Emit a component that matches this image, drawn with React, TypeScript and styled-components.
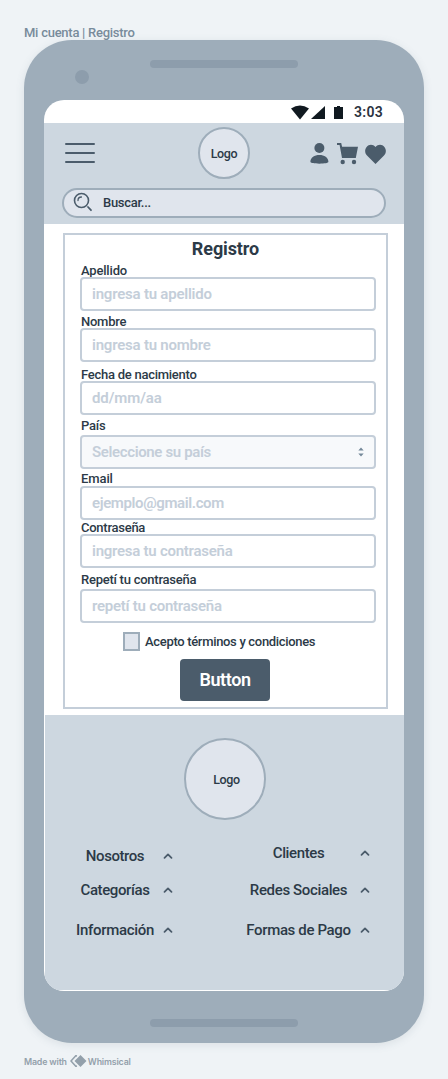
import React from "react";
import styled, { createGlobalStyle } from "styled-components";

const GlobalStyle = createGlobalStyle`
  * { box-sizing: border-box; }
  body {
    margin: 0;
    background: #eff3f6;
    color: #2c3a47;
    font-family: Roboto, "Liberation Sans", sans-serif;
    font-weight: 500;
  }
`;

const Page = styled.main`
  width: 448px;
  height: 1079px;
  padding: 25px 24px 0;
  overflow: hidden;
`;

const FrameTitle = styled.div`
  height: 15px;
  font-size: 13px;
  line-height: 16px;
  letter-spacing: -0.26px;
  color: #788b9b;
  white-space: nowrap;
`;

const Phone = styled.section`
  width: 400px;
  height: 1003px;
  padding: 0 20px;
  border-radius: 48px;
  background: #9eadba;
  box-shadow: 0 2px 8px rgba(90, 110, 130, 0.14);
  display: flex;
  flex-direction: column;
`;

const PhoneTop = styled.div`
  height: 60px;
  display: flex;
  padding: 20px 0 0 31px;
`;

const Camera = styled.span`
  width: 14px;
  height: 14px;
  margin-top: 10px;
  border-radius: 50%;
  background: #8d9dac;
`;

const Speaker = styled.span`
  width: 148px;
  height: 8px;
  border-radius: 4px;
  background: #8d9dac;
`;

const TopSpeaker = styled(Speaker)`
  margin-left: 61px;
`;

const PhoneBottom = styled.div`
  flex: 1;
  display: flex;
  justify-content: center;
  padding-top: 28px;
`;

const Screen = styled.div`
  height: 891px;
  border-radius: 20px;
  background: #fff;
  overflow: hidden;
`;

const StatusBar = styled.div`
  height: 23px;
  display: flex;
  align-items: center;
  justify-content: flex-end;
  padding: 1px 21px 0 0;
  color: #2c333f;
  font-size: 14px;
  font-weight: 600;
  letter-spacing: 0.3px;
`;

const StatusIcons = styled.svg`
  width: 54px;
  height: 15px;
  margin: 1px 9px 0 0;
`;

const Header = styled.header`
  height: 101px;
  background: #cdd7e0;
  padding: 4px 18px 0;
`;

const HeaderRow = styled.div`
  height: 52px;
  display: grid;
  grid-template-columns: 136px 52px 1fr;
  align-items: center;
`;

const MenuIcon = styled.svg`
  width: 30px;
  height: 22px;
  margin-left: 3px;
`;

const Logo = styled.div<{ $size: number }>`
  width: ${(p) => p.$size}px;
  height: ${(p) => p.$size}px;
  border: 2px solid #9eadba;
  border-radius: 50%;
  background: #e0e5ed;
  display: flex;
  align-items: center;
  justify-content: center;
  font-size: 12.5px;
  letter-spacing: -0.35px;
`;

const HeaderIcons = styled.svg`
  width: 78px;
  height: 24px;
  justify-self: end;
`;

const Search = styled.div`
  height: 30px;
  width: 324px;
  margin-top: 9px;
  border: 2px solid #9eadba;
  border-radius: 15px;
  background: #e0e5ed;
  display: flex;
  align-items: center;
  padding: 0 0 2px 9px;
  font-size: 13px;
  letter-spacing: -0.3px;
`;

const SearchIcon = styled.svg`
  width: 20px;
  height: 20px;
  margin-right: 10px;
`;

const FormArea = styled.div`
  height: 491px;
  padding: 9px 16px 0 19px;
`;

const Form = styled.form`
  height: 476px;
  border: 2px solid #c4ced9;
  padding: 4px 10px 0 15px;
  display: flex;
  flex-direction: column;
`;

const Title = styled.h1`
  margin: 0;
  height: 24px;
  font-size: 18px;
  line-height: 20px;
  font-weight: 700;
  letter-spacing: -0.1px;
  text-align: center;
  padding-right: 5px;
`;

const Field = styled.label<{ $before: number; $gap: number }>`
  display: flex;
  flex-direction: column;
  margin-top: ${(p) => p.$before}px;
  gap: ${(p) => p.$gap}px;
`;

const Caption = styled.span<{ $track: number }>`
  height: 14px;
  line-height: 15px;
  font-size: 13px;
  letter-spacing: ${(p) => p.$track}px;
  padding-left: 1px;
`;

const Control = styled.span<{ $muted?: boolean; $track: number }>`
  width: 296px;
  height: 34px;
  border: 2px solid #c4ced9;
  border-radius: 4px;
  background: ${(p) => (p.$muted ? "#f7f9fb" : "#fff")};
  color: #c4ced9;
  display: flex;
  align-items: center;
  justify-content: space-between;
  padding: 0 10px;
  font-size: 15px;
  font-weight: 600;
  letter-spacing: ${(p) => p.$track}px;
`;

const SortIcon = styled.svg`
  width: 6px;
  height: 10px;
`;

const Terms = styled.label`
  height: 19px;
  margin: 9px 0 0 43px;
  display: flex;
  align-items: center;
  gap: 5px;
  font-size: 13px;
  letter-spacing: -0.32px;
`;

const CheckBox = styled.span`
  width: 17px;
  height: 19px;
  border: 2px solid #9eadba;
  background: #e0e5ed;
`;

const Submit = styled.button`
  width: 90px;
  height: 42px;
  margin: 8px 0 0 100px;
  padding: 0 0 2px;
  border: 0;
  border-radius: 4px;
  background: #4b5c6b;
  color: #fff;
  font: 600 18px Roboto, "Liberation Sans", sans-serif;
  letter-spacing: -0.4px;
`;

const Footer = styled.footer`
  height: 275px;
  margin-left: 1px;
  background: #cdd7e0;
  padding-top: 23px;
`;

const FooterLogo = styled(Logo)`
  margin-left: 139px;
  padding: 1px 0 0 3px;
`;

const Columns = styled.nav`
  display: grid;
  grid-template-columns: 97px 124px;
  column-gap: 73px;
  padding: 22px 34px 0 31px;
`;

const Column = styled.div`
  display: flex;
  flex-direction: column;
`;

const FooterItem = styled.div<{ $top: number; $track: number }>`
  height: 20px;
  margin-top: ${(p) => p.$top}px;
  display: flex;
  align-items: center;
  font-size: 15px;
  letter-spacing: ${(p) => p.$track}px;
  white-space: nowrap;
  & > span { flex: 1; text-align: center; }
`;

const Chevron = styled.svg`
  width: 10px;
  height: 8px;
  margin-left: 9px;
  flex: none;
`;

const Credit = styled.div`
  height: 14px;
  margin-top: 11px;
  display: flex;
  align-items: center;
  color: #93a0ab;
  font: 600 8.8px Inter, sans-serif;
  letter-spacing: -0.16px;
`;

const Diamonds = styled.svg`
  width: 17px;
  height: 12px;
  margin: 0 1px 0 3px;
`;

const fields = [
  { label: "Apellido", hint: "ingresa tu apellido", before: 0, gap: 0, lt: -0.18, ht: -0.22 },
  { label: "Nombre", hint: "ingresa tu nombre", before: 3, gap: 0, lt: -0.25, ht: -0.22 },
  { label: "Fecha de nacimiento", hint: "dd/mm/aa", before: 5, gap: 0, lt: -0.26, ht: -0.1 },
  { label: "País", hint: "Seleccione su país", before: 3, gap: 3, lt: -0.2, ht: -0.36, select: true },
  { label: "Email", hint: "ejemplo@gmail.com", before: 2, gap: 1, lt: -0.1, ht: -0.38 },
  { label: "Contraseña", hint: "ingresa tu contraseña", before: 0, gap: 0, lt: -0.26, ht: -0.26 },
  { label: "Repetí tu contraseña", hint: "repetí tu contraseña", before: 4, gap: 3, lt: -0.25, ht: -0.26 },
];

const leftLinks = [
  { text: "Nosotros", top: 4, track: -0.42 },
  { text: "Categorías", top: 14, track: -0.4 },
  { text: "Información", top: 20, track: -0.32 },
];

const rightLinks = [
  { text: "Clientes", top: 1, track: -0.38 },
  { text: "Redes Sociales", top: 17, track: -0.36 },
  { text: "Formas de Pago", top: 20, track: -0.36 },
];

const LinkColumn = ({ links }: { links: typeof leftLinks }) => (
  <Column>
    {links.map((l) => (
      <FooterItem key={l.text} $top={l.top} $track={l.track}>
        <span>{l.text}</span>
        <Chevron viewBox="0 0 10 8" fill="none" stroke="#4b5c6b" strokeWidth="1.8" strokeLinecap="round" strokeLinejoin="round">
          <path d="M1.5 5.8 5 2.4l3.5 3.4" />
        </Chevron>
      </FooterItem>
    ))}
  </Column>
);

export default function App() {
  return (
    <Page>
      <GlobalStyle />
      <FrameTitle>Mi cuenta | Registro</FrameTitle>
      <Phone>
        <PhoneTop>
          <Camera />
          <TopSpeaker />
        </PhoneTop>
        <Screen>
          <StatusBar>
            <StatusIcons viewBox="0 0 54 15" fill="#101920">
              <path d="M0 3.5Q9-2.5 18 3.5L9 14.5Z" />
              <path d="M34 1v13H20Z" />
              <path d="M43 2h3V1h3v1h3v12h-9Z" />
            </StatusIcons>
            3:03
          </StatusBar>
          <Header>
            <HeaderRow>
              <MenuIcon viewBox="0 0 30 22" stroke="#4b5c6b" strokeWidth="2" strokeLinecap="round">
                <path d="M1 2h28M1 11h28M1 20h28" />
              </MenuIcon>
              <Logo $size={52}>Logo</Logo>
              <HeaderIcons viewBox="0 0 78 24" fill="#4b5c6b">
                <circle cx="11.4" cy="7" r="5" />
                <path d="M2.4 20.8C2.4 16.200 6.500 13.900 11.400 13.900s9 2.300 9 6.900c0 1.200-4 1.900-9 1.900s-9-.7-9-1.900Z" />
                <path d="M29 2h4.200l.9 3.700H50L47.800 17H34L31.600 4H29Z" />
                <circle cx="34.7" cy="21" r="2.2" />
                <circle cx="46" cy="21" r="2.2" />
                <path d="M67.500 23 59 14.400c-2.300-2.400-2.500-6-.4-8.500 2.300-2.700 6.400-2.800 8.900.1 2.500-2.900 6.600-2.800 8.900-.1 2.100 2.500 1.900 6.100-.4 8.500Z" />
              </HeaderIcons>
            </HeaderRow>
            <Search>
              <SearchIcon viewBox="0 0 20 20" fill="none" stroke="#4b5c6b" strokeLinecap="round">
                <circle cx="8.5" cy="8.5" r="7" strokeWidth="1.6" />
                <path d="M5 8.5Q5 5 8.500 5" strokeWidth="1.3" />
                <path d="m15 15 3 3.2" strokeWidth="1.8" />
              </SearchIcon>
              Buscar...
            </Search>
          </Header>
          <FormArea>
            <Form>
              <Title>Registro</Title>
              {fields.map((f) => (
                <Field key={f.label} $before={f.before} $gap={f.gap}>
                  <Caption $track={f.lt}>{f.label}</Caption>
                  <Control $muted={f.select} $track={f.ht}>
                    {f.hint}
                    {f.select && (
                      <SortIcon viewBox="0 0 6 10" fill="#75899a">
                        <path d="M.3 3.600 3 .5l2.700 3.100ZM.3 6.400 3 9.500l2.700-3.100Z" />
                      </SortIcon>
                    )}
                  </Control>
                </Field>
              ))}
              <Terms>
                <CheckBox />
                Acepto términos y condiciones
              </Terms>
              <Submit type="button">Button</Submit>
            </Form>
          </FormArea>
          <Footer>
            <FooterLogo $size={82}>Logo</FooterLogo>
            <Columns>
              <LinkColumn links={leftLinks} />
              <LinkColumn links={rightLinks} />
            </Columns>
          </Footer>
        </Screen>
        <PhoneBottom>
          <Speaker />
        </PhoneBottom>
      </Phone>
      <Credit>
        Made with
        <Diamonds viewBox="0 0 17 12">
          <path d="M7 1 5.8.7 1 6l4.800 5.300L7 11" fill="none" stroke="#93a0ab" strokeWidth="1.5" />
          <path d="m10.500 0 6 6-6 6-6-6Z" fill="#93a0ab" />
        </Diamonds>
        Whimsical
      </Credit>
    </Page>
  );
}
